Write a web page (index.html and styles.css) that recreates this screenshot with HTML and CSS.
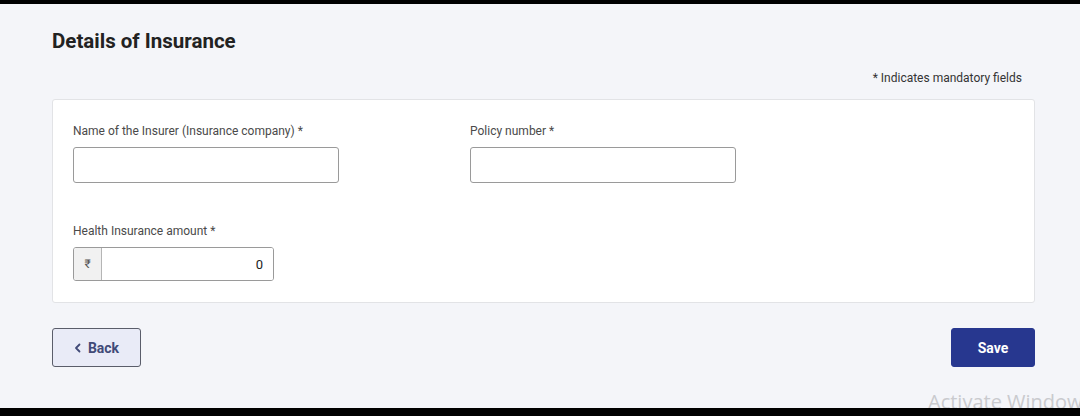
FILE: index.html
```html
<!DOCTYPE html>
<html lang="en">
<head>
<meta charset="utf-8">
<title>Details of Insurance</title>
<link rel="stylesheet" href="styles.css">
</head>
<body>
<div class="screen">
  <main class="page">
    <h1 class="title">Details of Insurance</h1>
    <p class="mandatory">* Indicates mandatory fields</p>
    <section class="card">
      <div class="grid">
        <div class="field">
          <label class="label">Name of the Insurer (Insurance company) *</label>
          <input class="input" type="text">
        </div>
        <div class="field">
          <label class="label">Policy number *</label>
          <input class="input" type="text">
        </div>
        <div class="field">
          <label class="label">Health Insurance amount *</label>
          <div class="group">
            <span class="addon">₹</span>
            <input class="input amount" type="text" value="0">
          </div>
        </div>
      </div>
    </section>
    <div class="actions">
      <button class="btn back"><svg class="chev" width="8" height="10" viewBox="0 0 8 10"><path d="M5.5 1.5 L2 5 L5.5 8.5" fill="none" stroke="currentColor" stroke-width="1.8" stroke-linecap="round" stroke-linejoin="round"/></svg>Back</button>
      <button class="btn save">Save</button>
    </div>
    <div class="watermark">Activate Windows</div>
  </main>
</div>
</body>
</html>
```

FILE: styles.css
```css
* { box-sizing: border-box; }
html, body { margin: 0; padding: 0; }
body {
  font-family: Roboto, "Noto Sans", Arial, sans-serif;
  background: #000;
  width: 1080px;
  height: 416px;
  overflow: hidden;
}
.screen {
  padding-top: 4px;
  height: 416px;
}
.page {
  position: relative;
  background: #f4f5f9;
  height: 404px;
  padding: 25px 45px 0 52px;
  overflow: hidden;
}
.title {
  margin: 0;
  font-size: 20.5px;
  line-height: 24px;
  font-weight: 700;
  color: #222;
}
.mandatory {
  margin: 17px 13px 0 0;
  text-align: right;
  font-size: 12px;
  line-height: 16px;
  color: #333;
}
.card {
  margin-top: 13px;
  background: #fff;
  border: 1px solid #e2e3e6;
  border-radius: 3px;
  padding: 23px 20px 21px 20px;
}
.grid {
  display: grid;
  grid-template-columns: 397px 397px;
  row-gap: 40px;
}
.field {
  display: flex;
  flex-direction: column;
  gap: 8px;
}
.label {
  font-size: 12px;
  line-height: 16px;
  color: #4a4a4a;
}
.input {
  width: 266px;
  height: 36px;
  border: 1px solid #9a9a9a;
  border-radius: 3px;
  background: #fff;
  font-family: inherit;
  font-size: 13px;
  padding: 0 10px;
  outline: none;
}
.group {
  display: flex;
  width: 201px;
  height: 34px;
  border: 1px solid #9a9a9a;
  border-radius: 3px;
  overflow: hidden;
}
.addon {
  width: 28px;
  flex: none;
  display: flex;
  align-items: center;
  justify-content: center;
  background: #f1f1f1;
  border-right: 1px solid #b5b5b5;
  font-size: 12px;
  color: #555;
}
.input.amount {
  border: none;
  border-radius: 0;
  height: 100%;
  width: auto;
  flex: 1;
  min-width: 0;
  text-align: right;
  padding-right: 10px;
  font-size: 13px;
  color: #222;
}
.actions {
  margin-top: 25px;
  display: flex;
  justify-content: space-between;
}
.btn {
  height: 39px;
  border-radius: 3px;
  font-family: inherit;
  font-size: 14px;
  font-weight: 700;
  display: inline-flex;
  align-items: center;
  justify-content: center;
  gap: 6px;
  cursor: pointer;
}
.back {
  width: 89px;
  background: #e9ebf7;
  border: 1px solid #5a5d6a;
  color: #414a78;
}
.save {
  width: 84px;
  background: #27378f;
  border: 1px solid #27378f;
  color: #fff;
}
.watermark {
  position: absolute;
  left: 928px;
  top: 386px;
  font-family: "Open Sans", "Liberation Sans", sans-serif;
  font-size: 20px;
  line-height: 24px;
  color: #c9cace;
  white-space: nowrap;
}
```
